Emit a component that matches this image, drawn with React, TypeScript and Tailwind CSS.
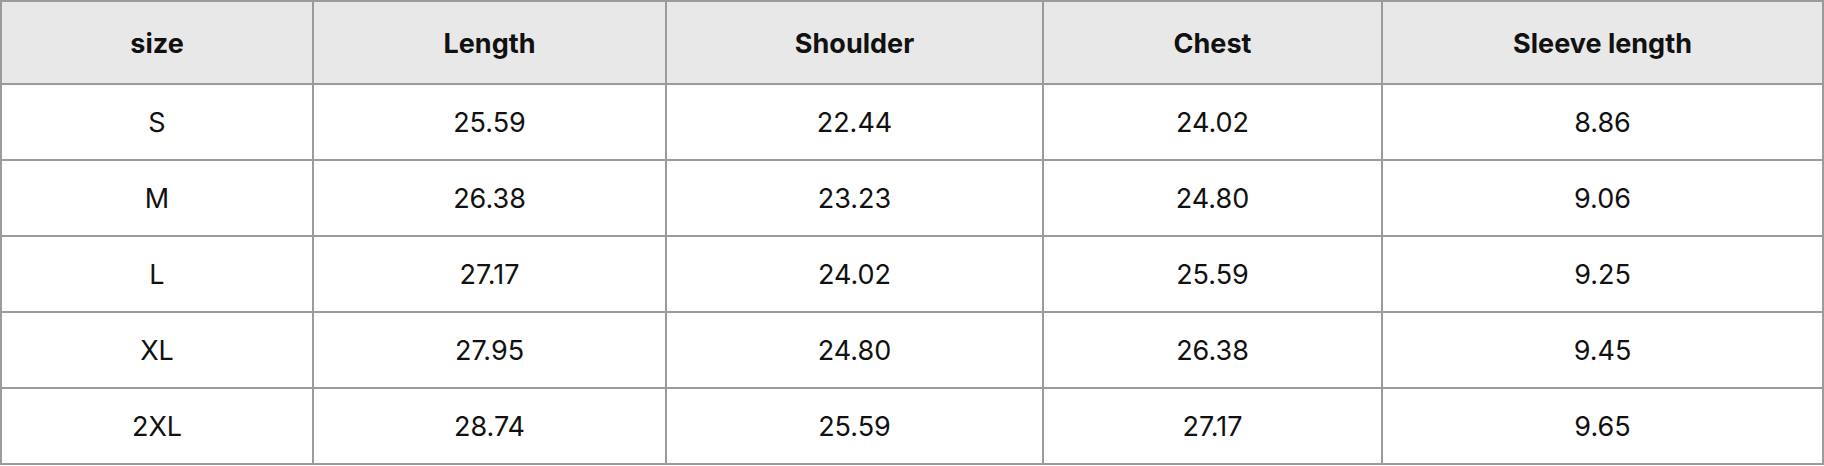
import React from "react";

const headers = ["size", "Length", "Shoulder", "Chest", "Sleeve length"];
const rows = [
  ["S", "25.59", "22.44", "24.02", "8.86"],
  ["M", "26.38", "23.23", "24.80", "9.06"],
  ["L", "27.17", "24.02", "25.59", "9.25"],
  ["XL", "27.95", "24.80", "26.38", "9.45"],
  ["2XL", "28.74", "25.59", "27.17", "9.65"],
];

export default function App() {
  return (
    <div className="w-[1824px] h-[466px] bg-white" style={{ fontFamily: "Inter, 'Liberation Sans', sans-serif" }}>
      <table className="w-[1822px] border-collapse table-fixed text-[#111111]">
        <colgroup>
          <col className="w-[312px]" />
          <col className="w-[353px]" />
          <col className="w-[377px]" />
          <col className="w-[339px]" />
          <col className="w-[441px]" />
        </colgroup>
        <thead>
          <tr className="h-[83px] bg-[#e8e8e8]">
            {headers.map((h) => (
              <th key={h} className="border-2 border-[#9b9b9b] text-[27px] font-bold text-center align-middle p-0 pt-[4px]">
                {h}
              </th>
            ))}
          </tr>
        </thead>
        <tbody>
          {rows.map((r) => (
            <tr key={r[0]} className="h-[76px]">
              {r.map((c, i) => (
                <td key={i} className="border-2 border-[#9b9b9b] text-[27px] font-normal text-center align-middle p-0 pt-[3px]">
                  {c}
                </td>
              ))}
            </tr>
          ))}
        </tbody>
      </table>
    </div>
  );
}
